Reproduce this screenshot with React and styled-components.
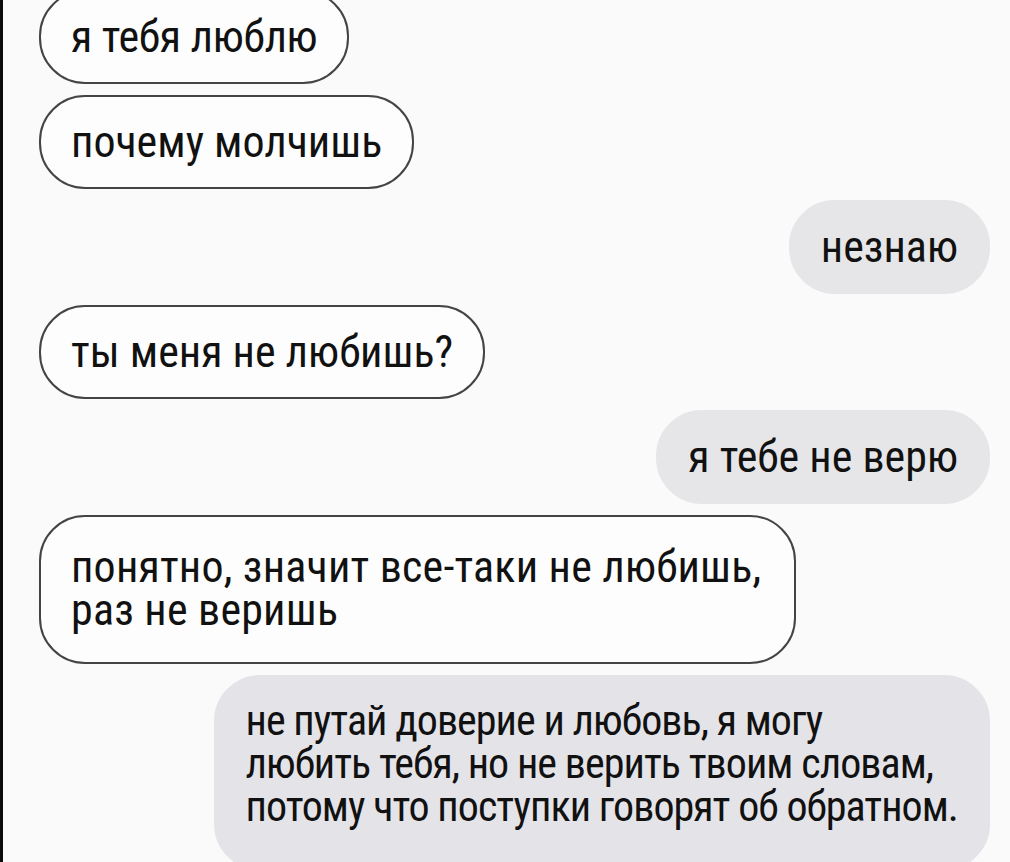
import React from "react";
import styled, { createGlobalStyle } from "styled-components";

const GlobalStyle = createGlobalStyle`
  html, body {
    margin: 0;
    padding: 0;
  }
  body {
    background: #fafafa;
    font-family: "Roboto Condensed", Roboto, "Liberation Sans", sans-serif;
    overflow: hidden;
  }
`;

const Screen = styled.div`
  width: 1010px;
  height: 862px;
  box-sizing: border-box;
  overflow: hidden;
  background: #fafafa;
  border-left: 3px solid #0c0c0c;
`;

const Thread = styled.div`
  display: flex;
  flex-direction: column;
  gap: 11px;
  margin-top: -10px;
  padding: 0 20px 0 36px;
`;

const Bubble = styled.div`
  align-self: ${(p) => (p.$mine ? "flex-end" : "flex-start")};
  box-sizing: border-box;
  padding: ${(p) => p.$padTop ?? 19}px ${(p) => p.$padRight ?? 30}px
    ${(p) => p.$padBottom ?? 19}px 30px;
  border-radius: 46px;
  background: ${(p) => (p.$mine ? p.$tint ?? "#e6e6e8" : "#fdfdfd")};
  border: 2px solid ${(p) => (p.$mine ? p.$tint ?? "#e6e6e8" : "#444444")};
  color: #111111;
  font-size: ${(p) => p.$size ?? 44}px;
  line-height: ${(p) => p.$lh ?? 52}px;
  letter-spacing: ${(p) => p.$tight ?? 0}px;
  white-space: nowrap;
`;

const messages = [
  { lines: ["я тебя люблю"], tight: -0.3 },
  { lines: ["почему молчишь"] },
  { lines: ["незнаю"], mine: true },
  { lines: ["ты меня не любишь?"] },
  { lines: ["я тебе не верю"], mine: true },
  {
    lines: ["понятно, значит все-таки не любишь,", "раз не веришь"],
    lh: 43,
    padTop: 29,
    padBottom: 30,
    padRight: 33,
    tight: 0.2,
  },
  {
    lines: [
      "не путай доверие и любовь, я могу",
      "любить тебя, но не верить твоим словам,",
      "потому что поступки говорят об обратном.",
    ],
    mine: true,
    tint: "#e4e3e8",
    size: 42,
    lh: 43,
    padTop: 22,
    padBottom: 40,
    tight: -0.95,
  },
];

export default function App() {
  return (
    <Screen>
      <GlobalStyle />
      <Thread>
        {messages.map((m, i) => (
          <Bubble
            key={i}
            $mine={m.mine}
            $tint={m.tint}
            $size={m.size}
            $lh={m.lh}
            $padTop={m.padTop}
            $padBottom={m.padBottom}
            $padRight={m.padRight}
            $tight={m.tight}
          >
            {m.lines.map((line, j) => (
              <React.Fragment key={j}>
                {j > 0 && <br />}
                {line}
              </React.Fragment>
            ))}
          </Bubble>
        ))}
      </Thread>
    </Screen>
  );
}
